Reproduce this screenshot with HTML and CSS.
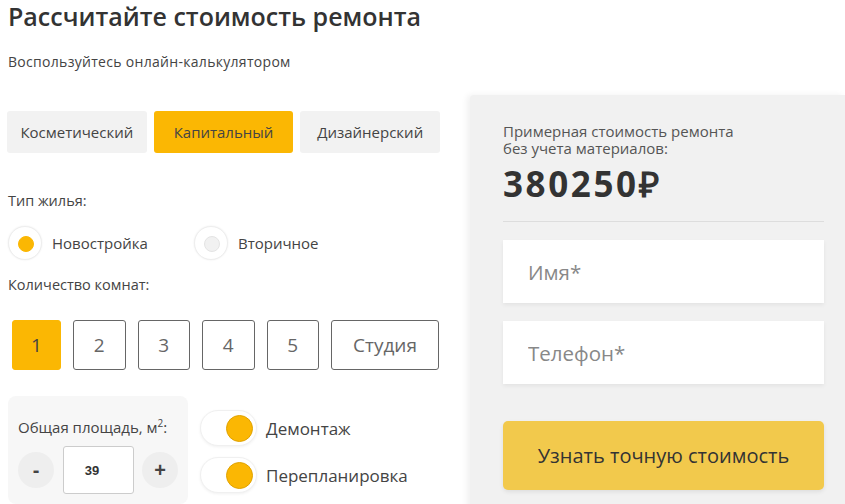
FILE: index.html
```html
<!DOCTYPE html>
<html lang="ru">
<head>
    <meta charset="UTF-8">
    <meta name="viewport" content="width=device-width, initial-scale=1.0">
    <title>Калькулятор ремонта</title>
    <link rel="stylesheet" href="styles.css">
</head>
<body>
    <div class="page">
        <h1 class="title">Рассчитайте стоимость ремонта</h1>
        <p class="lead">Воспользуйтесь онлайн-калькулятором</p>

        <div class="calc">
            <div class="options">
                <div class="tabs">
                    <button class="tab">Косметический</button>
                    <button class="tab active">Капитальный</button>
                    <button class="tab">Дизайнерский</button>
                </div>

                <div class="label label-type">Тип жилья:</div>
                <div class="radios">
                    <label class="radio checked"><span class="dot"></span>Новостройка</label>
                    <label class="radio"><span class="dot"></span>Вторичное</label>
                </div>

                <div class="label label-rooms">Количество комнат:</div>
                <div class="rooms">
                    <button class="room active">1</button>
                    <button class="room">2</button>
                    <button class="room">3</button>
                    <button class="room">4</button>
                    <button class="room">5</button>
                    <button class="room studio">Студия</button>
                </div>

                <div class="bottom">
                    <div class="area">
                        <div class="area-label">Общая площадь, м<sup>2</sup>:</div>
                        <div class="stepper">
                            <button class="step">-</button>
                            <input class="area-input" type="text" value="39">
                            <button class="step">+</button>
                        </div>
                    </div>
                    <div class="switches">
                        <label class="switch"><span class="track"><span class="knob"></span></span>Демонтаж</label>
                        <label class="switch"><span class="track"><span class="knob"></span></span>Перепланировка</label>
                    </div>
                </div>
            </div>

            <aside class="result">
                <div class="result-caption">
                    <div class="caption-line">Примерная стоимость ремонта</div>
                    <div class="caption-line">без учета материалов:</div>
                </div>
                <div class="price">380250₽</div>
                <div class="divider"></div>
                <input class="field" type="text" placeholder="Имя*">
                <input class="field" type="text" placeholder="Телефон*">
                <button class="submit">Узнать точную стоимость</button>
            </aside>
        </div>
    </div>
</body>
</html>
```

FILE: styles.css
```css
* {
    box-sizing: border-box;
}
body {
    margin: 0;
    background: #fff;
    color: #444;
    font-family: "Open Sans", sans-serif;
    overflow: hidden;
}
button, input {
    font-family: inherit;
}
.page {
    padding-left: 8px;
}
.title {
    margin: 0;
    font-size: 25px;
    line-height: 32px;
    font-weight: 600;
    color: #333;
}
.lead {
    margin: 20px 0 0;
    font-size: 14px;
    line-height: 20px;
    letter-spacing: 0.3px;
    color: #444;
}
.calc {
    display: flex;
    margin-top: 23px;
}
.options {
    width: 432px;
    padding-top: 16px;
}
.tabs {
    display: flex;
    gap: 7px;
    margin-left: -1px;
}
.tab {
    width: 140px;
    height: 42px;
    border: none;
    border-radius: 3px;
    background: #f2f2f2;
    color: #444;
    font-size: 15px;
    cursor: pointer;
}
.tab.active {
    background: #fbb703;
}
.label {
    font-size: 14.5px;
    line-height: 20px;
    color: #444;
}
.label-type {
    margin-top: 38px;
}
.radios {
    display: flex;
    margin-top: 15px;
}
.radio {
    display: flex;
    align-items: center;
    gap: 10px;
    width: 186px;
    font-size: 15px;
}
.dot {
    width: 34px;
    height: 34px;
    border-radius: 50%;
    background: #fff;
    border: 1px solid #eee;
    box-shadow: 0 0 2px rgba(0, 0, 0, 0.08);
    position: relative;
    flex-shrink: 0;
}
.dot::after {
    content: "";
    position: absolute;
    left: 9px;
    top: 9px;
    width: 14px;
    height: 14px;
    border-radius: 50%;
    background: #f1f1f1;
    border: 1px solid #e4e4e4;
}
.radio.checked .dot::after {
    background: #fbb703;
    border-color: #fbb703;
}
.label-rooms {
    margin-top: 15px;
}
.rooms {
    display: flex;
    gap: 12px;
    margin-top: 25px;
    padding-left: 4px;
}
.room {
    width: 52.5px;
    height: 50px;
    border: 1px solid #666;
    border-radius: 3px;
    background: #fff;
    color: #666;
    font-size: 19px;
    cursor: pointer;
}
.room.active {
    width: 49px;
    border-color: #fbb703;
    background: #fbb703;
    color: #444;
}
.room.studio {
    width: 108px;
}
.bottom {
    display: flex;
    gap: 12px;
    margin-top: 26px;
}
.area {
    width: 180px;
    padding: 18px 10px 10px;
    border-radius: 8px;
    background: #f7f7f7;
}
.area-label {
    font-size: 15px;
    line-height: 26px;
    color: #444;
}
.area-label sup {
    font-size: 10px;
    line-height: 0;
}
.stepper {
    display: flex;
    align-items: center;
    justify-content: space-between;
    margin-top: 6px;
}
.step {
    width: 36px;
    height: 36px;
    border: none;
    border-radius: 50%;
    background: #eee;
    color: #444;
    font-size: 20px;
    font-weight: 700;
    font-family: "Liberation Sans", sans-serif;
    cursor: pointer;
}
.area-input {
    width: 71px;
    height: 48px;
    border: 1px solid #ccc;
    border-radius: 3px;
    background: #fff;
    text-align: center;
    padding: 0 12px 0 0;
    font-size: 13px;
    font-weight: 700;
    font-family: "Liberation Sans", sans-serif;
    color: #333;
}
.switches {
    display: flex;
    flex-direction: column;
    gap: 11px;
    padding-top: 14px;
}
.switch {
    display: flex;
    align-items: center;
    gap: 9px;
    font-size: 17px;
    color: #444;
}
.track {
    width: 57px;
    height: 36px;
    border-radius: 18px;
    background: #fff;
    border: 1px solid #f0f0f0;
    box-shadow: 0 1px 3px rgba(0, 0, 0, 0.06);
    display: flex;
    align-items: center;
    justify-content: flex-end;
    padding-right: 3px;
}
.knob {
    width: 27px;
    height: 27px;
    border-radius: 50%;
    background: #fbb703;
    border: 1px solid #e0a200;
}
.result {
    width: 375px;
    margin-left: 30px;
    min-height: 420px;
    padding: 28px 21px 0 33px;
    background: #f1f1f1;
    border-radius: 4px 0 0 0;
    box-shadow: -3px 0 6px rgba(0, 0, 0, 0.06);
}
.result-caption {
    font-size: 15px;
    color: #555;
}
.caption-line {
    line-height: 17px;
}
.price {
    margin-top: 7px;
    font-size: 35px;
    line-height: 40px;
    font-weight: 700;
    letter-spacing: 2.6px;
    color: #333;
}
.divider {
    margin-top: 17px;
    border-top: 1px solid #ddd;
}
.field {
    display: block;
    width: 100%;
    height: 63px;
    margin-top: 18px;
    padding: 0 25px;
    border: none;
    background: #fff;
    box-shadow: 0 2px 4px rgba(0, 0, 0, 0.06);
    font-size: 20.5px;
    color: #333;
}
.field::placeholder {
    color: #888;
}
.submit {
    display: block;
    width: 100%;
    height: 69px;
    margin-top: 37px;
    border: none;
    border-radius: 5px;
    background: #f2c94c;
    box-shadow: 0 2px 4px rgba(0, 0, 0, 0.08);
    color: #333;
    font-size: 20px;
    cursor: pointer;
}
```
